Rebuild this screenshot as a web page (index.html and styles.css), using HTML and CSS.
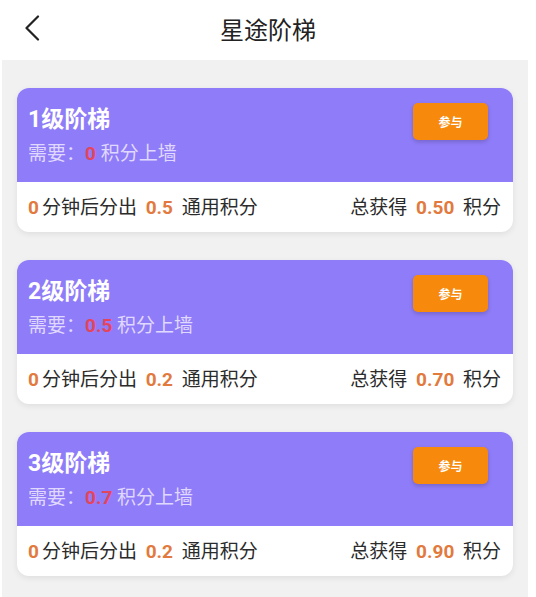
FILE: index.html
```html
<!DOCTYPE html>
<html lang="zh-CN">
<head>
  <meta charset="UTF-8">
  <meta name="viewport" content="width=device-width, initial-scale=1.0">
  <title>星途阶梯</title>
  <link rel="stylesheet" href="styles.css">
</head>
<body>
  <div class="topbar">
    <span class="back">
      <svg width="16" height="26" viewBox="0 0 16 26"><path d="M14 1.5 L2.5 13 L14 24.5" fill="none" stroke="#222" stroke-width="2.2" stroke-linecap="round" stroke-linejoin="round"/></svg>
    </span>
    <h1>星途阶梯</h1>
  </div>

  <div class="panel">
    <div class="card">
      <div class="card-head">
        <div class="info">
          <div class="level">1级阶梯</div>
          <div class="need">需要：<b>0</b> 积分上墙</div>
        </div>
        <button class="join">参与</button>
      </div>
      <div class="card-foot">
        <span><em>0</em>分钟后分出 <em class="gap">0.5</em> 通用积分</span>
        <span>总获得 <em class="gap">0.50</em> 积分</span>
      </div>
    </div>

    <div class="card">
      <div class="card-head">
        <div class="info">
          <div class="level">2级阶梯</div>
          <div class="need">需要：<b>0.5</b> 积分上墙</div>
        </div>
        <button class="join">参与</button>
      </div>
      <div class="card-foot">
        <span><em>0</em>分钟后分出 <em class="gap">0.2</em> 通用积分</span>
        <span>总获得 <em class="gap">0.70</em> 积分</span>
      </div>
    </div>

    <div class="card">
      <div class="card-head">
        <div class="info">
          <div class="level">3级阶梯</div>
          <div class="need">需要：<b>0.7</b> 积分上墙</div>
        </div>
        <button class="join">参与</button>
      </div>
      <div class="card-foot">
        <span><em>0</em>分钟后分出 <em class="gap">0.2</em> 通用积分</span>
        <span>总获得 <em class="gap">0.90</em> 积分</span>
      </div>
    </div>
  </div>
</body>
</html>
```

FILE: styles.css
```css
* {
  box-sizing: border-box;
}
body {
  margin: 0;
  background: #fff;
  font-family: Roboto, "Noto Sans CJK SC", sans-serif;
  color: #2b2b2b;
  height: 597px;
  display: flex;
  flex-direction: column;
}
.topbar {
  height: 60px;
  display: flex;
  align-items: center;
  justify-content: center;
  position: relative;
}
.topbar h1 {
  margin: 0 0 4px 0;
  font-size: 24px;
  font-weight: 400;
  color: #222;
}
.back {
  position: absolute;
  left: 24px;
  top: 15px;
  display: flex;
}
.panel {
  flex: 1;
  margin: 0 8px 0 2px;
  background: #f1f1f1;
  padding: 28px 15px 0 15px;
  display: flex;
  flex-direction: column;
  gap: 28px;
}
.card {
  border-radius: 12px;
  background: #fff;
  overflow: hidden;
  box-shadow: 0 2px 6px rgba(0, 0, 0, 0.08);
}
.card-head {
  height: 94px;
  background: #8f7cf8;
  display: flex;
  justify-content: space-between;
  align-items: flex-start;
  padding: 0 25px 0 11px;
}
.info {
  padding-top: 18px;
}
.level {
  color: #fff;
  font-size: 23px;
  font-weight: 700;
  line-height: 27px;
}
.need {
  margin-top: 9px;
  color: #e0d9ff;
  font-size: 19px;
  line-height: 24px;
}
.need b {
  color: #e5455c;
}
.join {
  margin-top: 15px;
  width: 75px;
  height: 37px;
  border: none;
  border-radius: 5px;
  background: #f7890c;
  color: #fff;
  font-family: inherit;
  font-size: 12px;
  font-weight: 700;
  box-shadow: 0 2px 4px rgba(0, 0, 0, 0.18);
}
.card-foot {
  height: 50px;
  display: flex;
  justify-content: space-between;
  align-items: center;
  padding: 0 12px 3px 11px;
  font-size: 19px;
}
.card-foot em {
  font-style: normal;
  font-weight: 700;
  color: #e27a3e;
  margin-right: 3px;
}
.card-foot em.gap {
  margin: 0 4px;
}
```
